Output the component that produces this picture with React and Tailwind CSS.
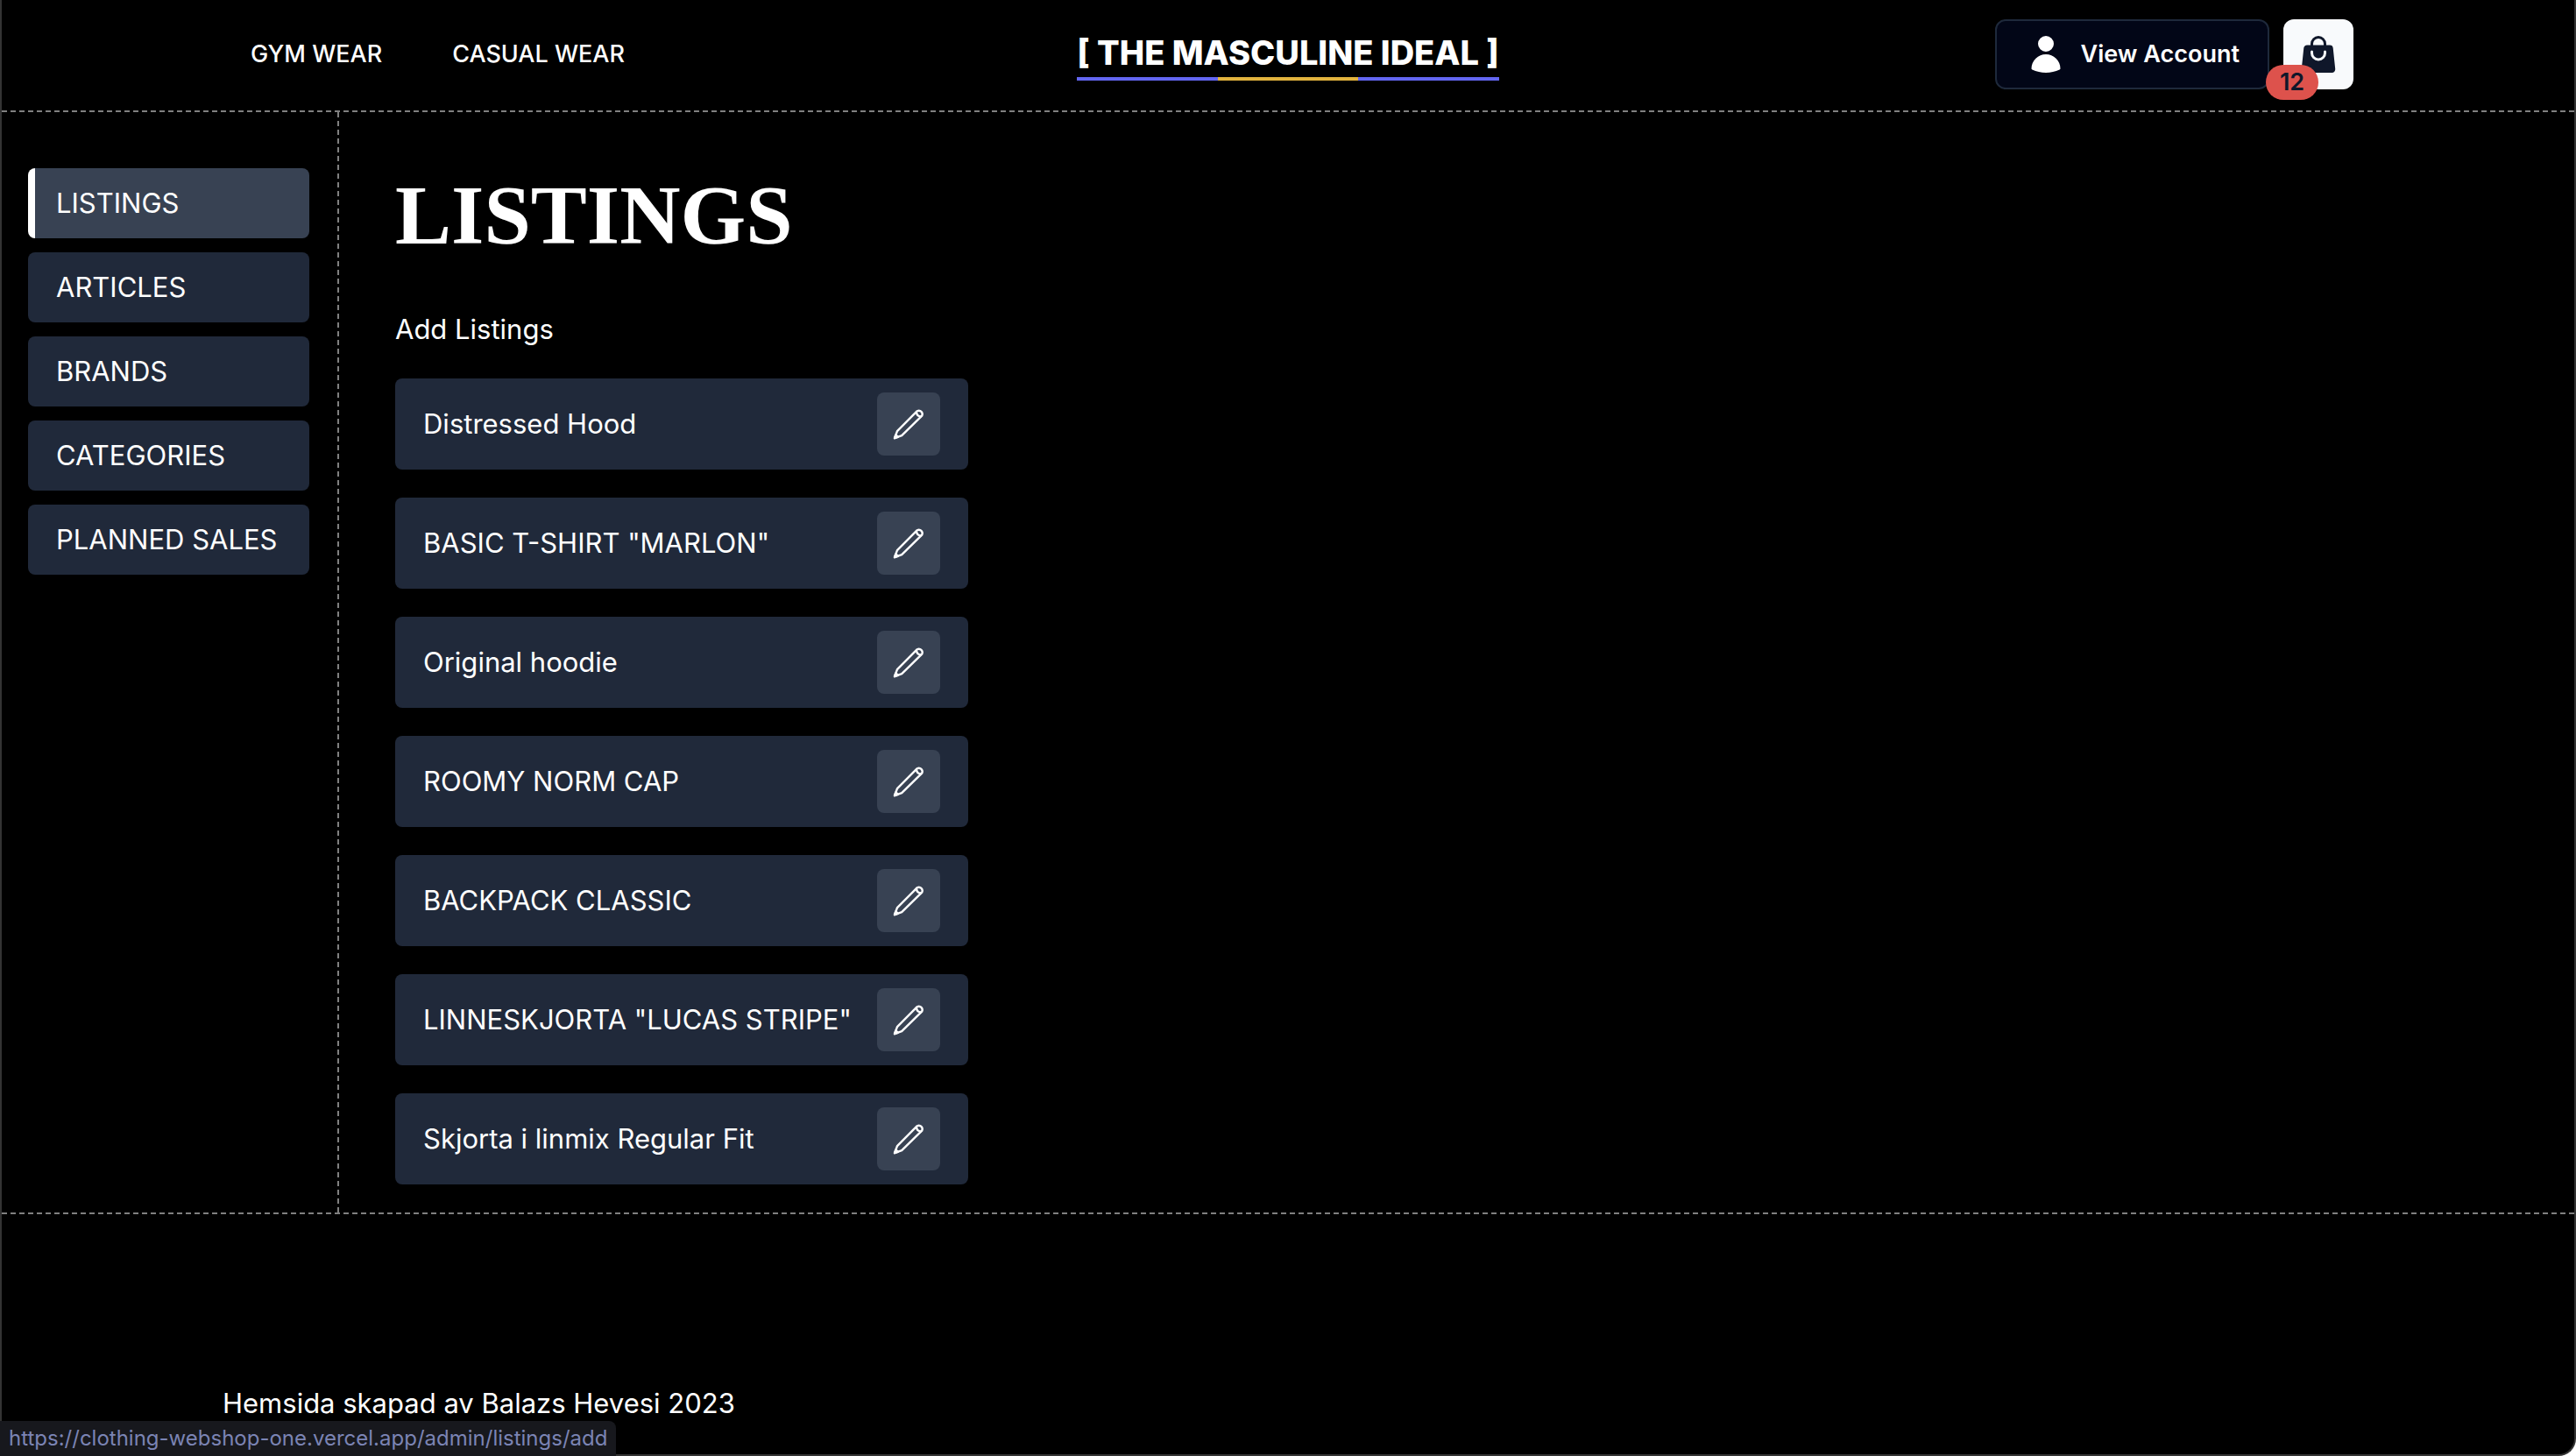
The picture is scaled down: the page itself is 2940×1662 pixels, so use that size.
const nav = ["LISTINGS", "ARTICLES", "BRANDS", "CATEGORIES", "PLANNED SALES"];
const listings = [
  "Distressed Hood",
  'BASIC T-SHIRT "MARLON"',
  "Original hoodie",
  "ROOMY NORM CAP",
  "BACKPACK CLASSIC",
  'LINNESKJORTA "LUCAS STRIPE"',
  "Skjorta i linmix Regular Fit",
];

function PencilIcon() {
  return (
    <svg
      className="size-10"
      viewBox="0 0 40 40"
      fill="none"
      stroke="currentColor"
      strokeWidth="2.4"
      strokeLinejoin="round"
      strokeLinecap="round"
      aria-hidden="true"
    >
      <path d="M4 36.2 7 28.2 29.8 5.2a4 4 0 0 1 5.4 5.4L12.2 33.2Z" />
      <path d="M29 6.5c.2 3.200 1.800 4.800 5 5" />
      <path d="M4 36.200 5.400 32.400 7.800 34.800Z" fill="currentColor" />
    </svg>
  );
}

function UserIcon() {
  return (
    <svg className="size-12" viewBox="0 0 24 24" fill="currentColor" aria-hidden="true">
      <path
        fillRule="evenodd"
        clipRule="evenodd"
        d="M7.5 6a4.5 4.5 0 1 1 9 0 4.5 4.5 0 0 1-9 0ZM3.751 20.105a8.25 8.25 0 0 1 16.498 0 .75.75 0 0 1-.437.695A18.683 18.683 0 0 1 12 22.5c-2.786 0-5.433-.608-7.812-1.7a.75.75 0 0 1-.437-.695Z"
      />
    </svg>
  );
}

function BagIcon() {
  return (
    <svg className="size-12" viewBox="0 0 24 24" fill="currentColor" aria-hidden="true">
      <path
        fillRule="evenodd"
        clipRule="evenodd"
        d="M7.5 6v.75H5.513c-.96 0-1.764.724-1.865 1.679l-1.263 12A1.875 1.875 0 0 0 4.25 22.5h15.5a1.875 1.875 0 0 0 1.865-2.071l-1.263-12a1.875 1.875 0 0 0-1.865-1.679H16.5V6a4.5 4.5 0 1 0-9 0ZM12 3a3 3 0 0 0-3 3v.75h6V6a3 3 0 0 0-3-3Zm-3 8.25a3 3 0 1 0 6 0v-.75a.75.75 0 0 1 1.5 0v.75a4.5 4.5 0 1 1-9 0v-.75a.75.75 0 0 1 1.5 0v.75Z"
      />
    </svg>
  );
}

export default function App() {
  return (
    <div className="relative flex min-h-screen flex-col overflow-hidden rounded-br-[20px] border-x-2 border-b-2 border-[#333] bg-black font-['Inter',sans-serif] text-[31px] leading-12 text-white">
      <header className="border-b-2 border-dashed border-[#808080]">
        <div className="mx-auto grid w-full max-w-[2432px] grid-cols-[1fr_auto_1fr] items-center pt-[22px] pb-6">
          <nav className="flex gap-20 pl-8 text-[27px] leading-10 font-medium">
            <a href="#gym">GYM WEAR</a>
            <a href="#casual">CASUAL WEAR</a>
          </nav>
          <a href="#home" className="flex flex-col">
            <span className="text-[38px] leading-14 font-extrabold">[ THE MASCULINE IDEAL ]</span>
            <span className="grid h-1 grid-cols-3">
              <span className="bg-[#6366f1]" />
              <span className="bg-[#e2b33e]" />
              <span className="bg-[#6366f1]" />
            </span>
          </a>
          <div className="flex justify-end gap-4">
            <button className="flex h-20 items-center gap-4 rounded-xl border-2 border-[#1e293b] bg-[#020617] px-8 text-[27px] font-semibold">
              <UserIcon />
              View Account
            </button>
            <button aria-label="Cart, 12 items" className="relative flex size-20 items-center justify-center rounded-xl bg-[#f8fafc] text-[#0f172a]">
              <BagIcon />
              <span className="absolute -bottom-3 -left-5 flex h-10 w-[60px] items-center justify-center rounded-full bg-[#dd524c] text-[27px] font-semibold">12</span>
            </button>
          </div>
        </div>
      </header>

      <div className="flex border-b-2 border-dashed border-[#808080]">
        <aside className="shrink-0 border-r-2 border-dashed border-[#808080] pt-16 pr-8 pl-[30px]">
          <nav className="flex w-[321px] flex-col gap-4">
            {nav.map((item, i) => (
              <a
                key={item}
                href="#section"
                aria-current={i === 0 ? "page" : undefined}
                className={
                  i === 0
                    ? "rounded-lg border-l-8 border-white bg-[#384253] py-4 pr-8 pl-6 whitespace-nowrap"
                    : "rounded-lg bg-[#20293a] px-8 py-4 whitespace-nowrap"
                }
              >
                {item}
              </a>
            ))}
          </nav>
        </aside>
        <main className="flex flex-col items-start px-16 pt-16 pb-8">
          <h1 className="font-['Liberation_Serif',serif] text-[96px] leading-[108px] font-bold">LISTINGS</h1>
          <a href="#add" className="mt-13 mb-8">Add Listings</a>
          <ul className="flex w-[654px] flex-col gap-8">
            {listings.map((name) => (
              <li key={name} className="flex items-center justify-between rounded-lg bg-[#20293a] px-8 py-4 whitespace-nowrap">
                {name}
                <button aria-label={`Edit ${name}`} className="rounded-lg bg-[#384253] p-4">
                  <PencilIcon />
                </button>
              </li>
            ))}
          </ul>
        </main>
      </div>

      <footer className="mx-auto w-full max-w-[2432px] pt-48">Hemsida skapad av Balazs Hevesi 2023</footer>

      <div className="fixed bottom-0 left-0 rounded-tr-lg bg-[#17181d] px-2.5 py-1 text-[24px] leading-8 text-[#7b84b4]">
        https://clothing-webshop-one.vercel.app/admin/listings/add
      </div>
    </div>
  );
}
